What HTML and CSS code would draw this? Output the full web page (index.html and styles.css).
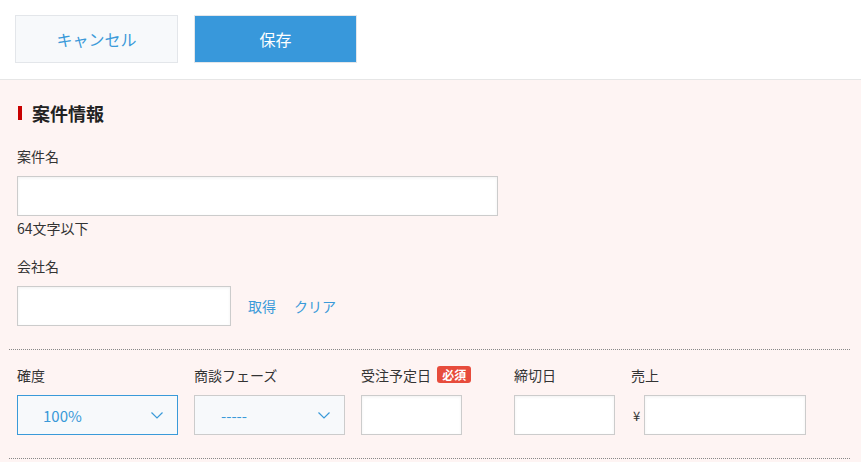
FILE: index.html
```html
<!DOCTYPE html>
<html lang="ja">
<head>
    <meta charset="utf-8">
    <title>案件編集</title>
    <link rel="stylesheet" href="styles.css">
</head>
<body>
    <div class="toolbar">
        <button class="btn btn_cancel">キャンセル</button>
        <button class="btn btn_save">保存</button>
    </div>

    <div class="main">
        <h2 class="section_title">案件情報</h2>

        <div class="field">
            <p class="label">案件名</p>
            <input class="text_input name_input" type="text">
            <p class="note">64文字以下</p>
        </div>

        <div class="field field_company">
            <p class="label">会社名</p>
            <div class="company_row">
                <input class="text_input company_input" type="text">
                <a class="link" href="#">取得</a>
                <a class="link link_clear" href="#">クリア</a>
            </div>
        </div>

        <div class="row_fields">
            <div class="col col_prob">
                <p class="label">確度</p>
                <div class="select select_active">
                    <span>100%</span>
                    <svg class="chevron" width="12" height="7" viewBox="0 0 12 7"><path d="M0.5 0.5 L6 6 L11.5 0.5" fill="none" stroke="#3a9ad9" stroke-width="1.2"/></svg>
                </div>
            </div>
            <div class="col col_phase">
                <p class="label">商談フェーズ</p>
                <div class="select">
                    <span>-----</span>
                    <svg class="chevron" width="12" height="7" viewBox="0 0 12 7"><path d="M0.5 0.5 L6 6 L11.5 0.5" fill="none" stroke="#3a9ad9" stroke-width="1.2"/></svg>
                </div>
            </div>
            <div class="col col_order">
                <p class="label">受注予定日 <span class="required">必須</span></p>
                <input class="text_input date_input" type="text">
            </div>
            <div class="col col_close">
                <p class="label">締切日</p>
                <input class="text_input date_input" type="text">
            </div>
            <div class="col col_sales">
                <p class="label">売上</p>
                <div class="sales_row">
                    <span class="yen">¥</span>
                    <input class="text_input sales_input" type="text">
                </div>
            </div>
        </div>
        <div class="bottom_line"></div>
    </div>
</body>
</html>
```

FILE: styles.css
```css
body {
    margin: 0;
    font-family: "Noto Sans CJK JP", "Noto Sans", sans-serif;
    font-size: 14px;
    color: #333;
    background-color: #fef4f3;
}

.toolbar {
    background-color: #fff;
    height: 64px;
    padding-top: 15px;
    padding-left: 15px;
    border-bottom: 1px solid #e6e6e6;
    display: flex;
    gap: 16px;
}
.btn {
    width: 163px;
    height: 48px;
    font-family: inherit;
    font-size: 16px;
    border: 1px solid #e3e6ea;
    cursor: pointer;
}
.btn_cancel {
    background-color: #f7f9fb;
    color: #3a9ad9;
}
.btn_save {
    background-color: #3898db;
    color: #fff;
}

.main {
    padding: 0 11px 0 9px;
}

.section_title {
    margin: 0;
    padding-top: 20px;
    padding-left: 23px;
    height: 36px;
    font-size: 18px;
    font-weight: bold;
    color: #222;
    position: relative;
    line-height: 26px;
}
.section_title::before {
    content: "";
    position: absolute;
    left: 9px;
    top: 26px;
    width: 4px;
    height: 14px;
    background-color: #c80000;
}

.field {
    padding-left: 8px;
}
.field_company {
    margin-top: 8px;
}
.label {
    margin: 0;
    line-height: 20px;
    padding: 10px 0;
    white-space: nowrap;
}
.note {
    margin: 0;
    line-height: 20px;
    padding-top: 2px;
}
.text_input {
    box-sizing: border-box;
    height: 40px;
    border: 1px solid #cccccc;
    background-color: #fff;
    box-shadow: inset 0 1px 3px rgba(0, 0, 0, 0.06);
    margin: 0;
    display: block;
}
.name_input {
    width: 481px;
}
.company_row {
    display: flex;
    align-items: center;
    gap: 17px;
}
.company_input {
    width: 214px;
}
.link {
    color: #3a9ad9;
    text-decoration: none;
}
.link_clear {
    margin-left: 1px;
}

.row_fields {
    margin-top: 23px;
    border-top: 1px dotted #888;
    padding: 5px 0 23px 8px;
    display: flex;
    gap: 16px;
}
.select {
    box-sizing: border-box;
    height: 40px;
    border: 1px solid #cccccc;
    background-color: #f7f9fb;
    display: flex;
    align-items: center;
    justify-content: space-between;
    padding: 0 14px 0 25px;
    color: #3a9ad9;
    font-size: 15px;
}
.select_active {
    border-color: #3a9ad9;
}
.col_prob {
    width: 161px;
}
.col_phase {
    width: 151px;
}
.col_phase .select {
    padding-left: 26px;
}
.col_order {
    width: 137px;
}
.col_close {
    width: 101px;
}
.chevron {
    display: block;
}
.date_input {
    width: 101px;
}
.required {
    display: inline-block;
    background-color: #e74c3c;
    color: #fff;
    font-size: 12px;
    font-weight: bold;
    line-height: 17px;
    padding: 0 5px;
    border-radius: 3px;
    margin-left: 3px;
    vertical-align: 1px;
}
.sales_row {
    display: flex;
    align-items: center;
    gap: 4px;
}
.yen {
    font-size: 13px;
    margin-left: 2px;
}
.sales_input {
    width: 162px;
}

.bottom_line {
    border-top: 1px dotted #888;
}
```
